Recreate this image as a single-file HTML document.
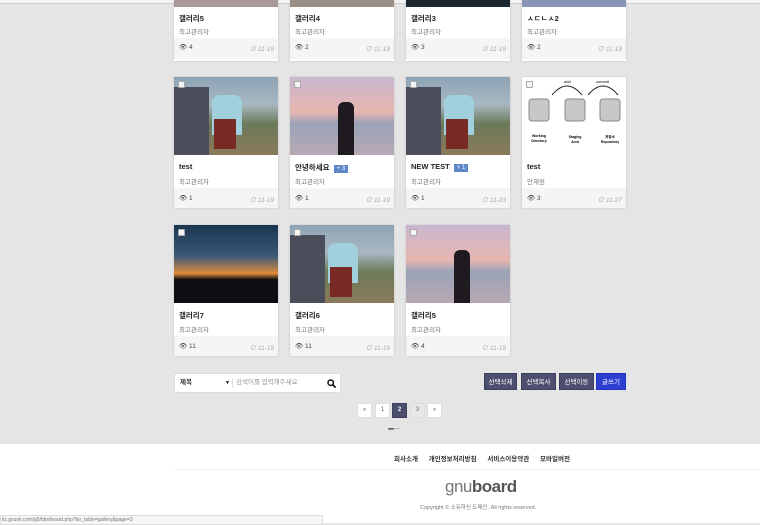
<!DOCTYPE html><html><head><meta charset="utf-8"><style>
*{margin:0;padding:0;box-sizing:border-box}
body{width:760px;height:523px;overflow:hidden;background:#e5e5e5;font-family:"Liberation Sans","Noto Sans CJK KR",sans-serif;position:relative}
.top{position:absolute;left:0;top:0;width:760px;height:4px;background:#f3f3f3;border-bottom:1px solid #d0d0d0}
.card{position:absolute;width:104px;background:#fff;box-shadow:0 0 2px rgba(0,0,0,.18)}
.img{height:78px;position:relative;overflow:hidden}
.cb{position:absolute;left:4px;top:4px;width:7px;height:7px;border:1px solid #aaa;background:#f4f4f4;border-radius:1px}
.t{font-size:7.5px;font-weight:bold;color:#222;padding:7px 5px 0;height:18px;white-space:nowrap}
.a{font-size:6.5px;color:#777;padding:3px 5px 0;height:15px}
.f{background:#f5f5f5;height:20px;font-size:6.5px;color:#444;padding:6px 5px;position:relative}
.f .d{position:absolute;right:4px;top:6px;color:#aaa;font-style:italic}
.bd{display:inline-block;background:#5e87c9;color:#fff;font-size:6px;padding:1px 3px;margin-left:2px;font-weight:normal}
.btn{position:absolute;top:373px;height:17px;font-size:6.5px;color:#fff;background:#4d4f6e;text-align:center;line-height:17px;border:1px solid #3d3f5e}
.pg{position:absolute;top:403px;width:15px;height:15px;border:1px solid #ddd;background:#fff;font-size:6px;text-align:center;line-height:13px;color:#666}
</style></head><body>
<div class="top"></div>
<!-- row 1 -->
<div class="card" style="left:174px;top:0;height:61px"><div style="height:7px;background:#a99"></div><div class="t" style="padding-top:6px;height:16px">갤러리5</div><div class="a">최고관리자</div><div class="f" style="height:21px;padding-top:5px">👁 4<span class="d" style="top:5px">⊙ 11-19</span></div></div>
<div class="card" style="left:290px;top:0;height:61px"><div style="height:7px;background:#998e85"></div><div class="t" style="padding-top:6px;height:16px">갤러리4</div><div class="a">최고관리자</div><div class="f" style="height:21px;padding-top:5px">👁 2<span class="d" style="top:5px">⊙ 11-19</span></div></div>
<div class="card" style="left:406px;top:0;height:61px"><div style="height:7px;background:#1c2630"></div><div class="t" style="padding-top:6px;height:16px">갤러리3</div><div class="a">최고관리자</div><div class="f" style="height:21px;padding-top:5px">👁 3<span class="d" style="top:5px">⊙ 11-19</span></div></div>
<div class="card" style="left:522px;top:0;height:61px"><div style="height:7px;background:#8895b8"></div><div class="t" style="padding-top:6px;height:16px">ㅅㄷㄴㅅ2</div><div class="a">최고관리자</div><div class="f" style="height:21px;padding-top:5px">👁 2<span class="d" style="top:5px">⊙ 11-19</span></div></div>
<!-- row 2 -->
<div class="card" style="left:174px;top:77px"><div class="img" style="background:linear-gradient(180deg,#8da3b5 0%,#a9b8c2 35%,#6b7a5a 60%,#8a7a5a 100%)"><div style="position:absolute;left:0;top:10px;width:35px;height:68px;background:#4a4e5a"></div><div style="position:absolute;left:38px;top:18px;width:30px;height:40px;background:#9fd0dc;border-radius:8px 8px 0 0"></div><div style="position:absolute;left:40px;top:42px;width:22px;height:30px;background:#7a2a25"></div><div class="cb"></div></div><div class="t">test</div><div class="a">최고관리자</div><div class="f">👁 1<span class="d">⊙ 11-19</span></div></div>
<div class="card" style="left:290px;top:77px"><div class="img" style="background:linear-gradient(180deg,#c9b6cf 0%,#e7b6b0 45%,#9aa3b8 60%,#b8a9b4 100%)"><div style="position:absolute;left:48px;top:25px;width:16px;height:53px;background:#1e1a20;border-radius:6px 6px 0 0"></div><div class="cb"></div></div><div class="t">안녕하세요 <span class="bd">+ 3</span></div><div class="a">최고관리자</div><div class="f">👁 1<span class="d">⊙ 11-19</span></div></div>
<div class="card" style="left:406px;top:77px"><div class="img" style="background:linear-gradient(180deg,#8da3b5 0%,#a9b8c2 35%,#6b7a5a 60%,#8a7a5a 100%)"><div style="position:absolute;left:0;top:10px;width:35px;height:68px;background:#4a4e5a"></div><div style="position:absolute;left:38px;top:18px;width:30px;height:40px;background:#9fd0dc;border-radius:8px 8px 0 0"></div><div style="position:absolute;left:40px;top:42px;width:22px;height:30px;background:#7a2a25"></div><div class="cb"></div></div><div class="t">NEW TEST <span class="bd">+ 1</span></div><div class="a">최고관리자</div><div class="f">👁 1<span class="d">⊙ 11-23</span></div></div>
<div class="card" style="left:522px;top:77px"><div class="img" style="background:#fff"><svg width="104" height="78"><path d="M30 18 Q45 0 60 18 M66 18 Q81 0 96 18" stroke="#222" fill="none"/><text x="42" y="6" font-size="4">add</text><text x="74" y="6" font-size="4">commit</text><g fill="#c8c8c8" stroke="#888"><rect x="7" y="22" width="20" height="22" rx="3"/><rect x="43" y="22" width="20" height="22" rx="3"/><rect x="78" y="22" width="20" height="22" rx="3"/></g><g font-size="3.5" font-weight="bold" text-anchor="middle"><text x="17" y="60">Working</text><text x="17" y="65">Directory</text><text x="53" y="61">Staging</text><text x="53" y="66">Area</text><text x="88" y="61">저장소</text><text x="88" y="66">Repository</text></g></svg><div class="cb"></div></div><div class="t">test</div><div class="a">안재원</div><div class="f">👁 3<span class="d">⊙ 11-27</span></div></div>
<!-- row 3 -->
<div class="card" style="left:174px;top:225px"><div class="img" style="background:linear-gradient(180deg,#1a3550 0%,#3a5a78 40%,#e08a3a 62%,#0c0e12 70%)"><div class="cb"></div></div><div class="t">갤러리7</div><div class="a">최고관리자</div><div class="f">👁 11<span class="d">⊙ 11-19</span></div></div>
<div class="card" style="left:290px;top:225px"><div class="img" style="background:linear-gradient(180deg,#8da3b5 0%,#a9b8c2 35%,#6b7a5a 60%,#8a7a5a 100%)"><div style="position:absolute;left:0;top:10px;width:35px;height:68px;background:#4a4e5a"></div><div style="position:absolute;left:38px;top:18px;width:30px;height:40px;background:#9fd0dc;border-radius:8px 8px 0 0"></div><div style="position:absolute;left:40px;top:42px;width:22px;height:30px;background:#7a2a25"></div><div class="cb"></div></div><div class="t">갤러리6</div><div class="a">최고관리자</div><div class="f">👁 11<span class="d">⊙ 11-19</span></div></div>
<div class="card" style="left:406px;top:225px"><div class="img" style="background:linear-gradient(180deg,#c9b6cf 0%,#e7b6b0 45%,#9aa3b8 60%,#b8a9b4 100%)"><div style="position:absolute;left:48px;top:25px;width:16px;height:53px;background:#1e1a20;border-radius:6px 6px 0 0"></div><div class="cb"></div></div><div class="t">갤러리5</div><div class="a">최고관리자</div><div class="f">👁 4<span class="d">⊙ 11-19</span></div></div>
<!-- search -->
<div style="position:absolute;left:174px;top:373px;width:167px;height:20px;background:#fff;border:1px solid #ddd;font-size:6.5px;line-height:18px"><span style="position:absolute;left:5px;font-weight:bold;color:#333">제목</span><span style="position:absolute;left:50px;font-size:5px">▼</span><span style="position:absolute;left:57px;top:4px;height:10px;border-left:1px solid #ddd"></span><span style="position:absolute;left:61px;color:#999">검색어를 입력해주세요</span><svg style="position:absolute;left:152px;top:5px" width="9" height="9"><circle cx="3.7" cy="3.7" r="2.7" stroke="#111" stroke-width="1.5" fill="none"/><path d="M5.8 5.8 L8.5 8.5" stroke="#111" stroke-width="1.8"/></svg></div>
<div class="btn" style="left:484px;width:33px">선택삭제</div>
<div class="btn" style="left:521px;width:35px">선택복사</div>
<div class="btn" style="left:559px;width:35px">선택이동</div>
<div class="btn" style="left:596px;width:30px;background:#2d3fd0;border-color:#2030c0">글쓰기</div>
<div class="pg" style="left:357px">«</div>
<div class="pg" style="left:375px">1</div>
<div class="pg" style="left:392px;background:#4d4f6e;color:#fff;border-color:#3d3f5e;font-weight:bold">2</div>
<div class="pg" style="left:410px;background:#e8e8e8">3</div>
<div class="pg" style="left:427px">»</div>
<div style="position:absolute;left:388px;top:426px;font-size:4px;color:#333;letter-spacing:-0.5px">●●●·······</div>
<!-- footer -->
<div style="position:absolute;left:0;top:444px;width:760px;height:79px;background:#fff">
<div style="position:absolute;left:394px;top:9px;font-size:6.5px;font-weight:bold;color:#333;word-spacing:9px">회사소개 개인정보처리방침 서비스이용약관 모바일버전</div>
<div style="position:absolute;left:174px;top:25px;width:586px;border-top:1px solid #eee"></div>
<div style="position:absolute;left:445px;top:33px;font-size:17px;color:#777;letter-spacing:-0.5px">gnu<b style="color:#555">board</b></div>
<div style="position:absolute;left:420px;top:59px;font-size:5.5px;color:#777">Copyright © 소유하신 도메인. All rights reserved.</div>
<div style="position:absolute;left:0;top:71px;width:323px;height:10px;background:#f6f6f6;border:1px solid #ddd;font-size:5px;color:#777;padding-left:1px;line-height:8px">ilz.gnuok.com/g5/bbs/board.php?bo_table=gallery&amp;page=3</div>
</div>
</body></html>
